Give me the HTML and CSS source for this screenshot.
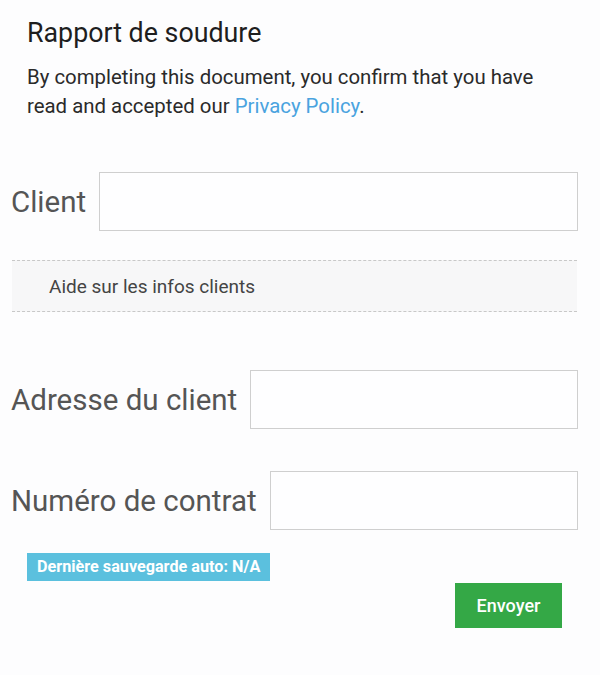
FILE: index.html
```html
<!DOCTYPE html>
<html lang="fr">
<head>
<meta charset="utf-8">
<title>Rapport de soudure</title>
<link rel="stylesheet" href="styles.css">
</head>
<body>
<div class="page">
  <div class="intro">
    <h1 class="title">Rapport de soudure</h1>
    <p class="notice">By completing this document, you confirm that you have read and accepted our <a class="link" href="#">Privacy Policy</a>.</p>
  </div>
  <form class="form">
    <div class="row row-client">
      <label class="label">Client</label>
      <input class="field" type="text">
    </div>
    <div class="help">Aide sur les infos clients</div>
    <div class="row row-adresse">
      <label class="label">Adresse du client</label>
      <input class="field" type="text">
    </div>
    <div class="row row-contrat">
      <label class="label">Numéro de contrat</label>
      <input class="field" type="text">
    </div>
    <div class="status"><span class="badge">Dernière sauvegarde auto: N/A</span></div>
    <div class="actions"><button class="submit" type="button">Envoyer</button></div>
  </form>
</div>
</body>
</html>
```
FILE: styles.css
```css
html, body {
  margin: 0;
  padding: 0;
  background: #fdfdfe;
}
body {
  font-family: Roboto, "Liberation Sans", sans-serif;
  color: #222;
}
.page {
  width: 600px;
}
.intro {
  padding: 19px 27px 0 27px;
}
.title {
  margin: 0;
  font-size: 26.8px;
  line-height: 29px;
  font-weight: 400;
  color: #1e1e1e;
}
.notice {
  margin: 15px 0 0 0;
  max-width: 540px;
  font-size: 20.4px;
  line-height: 29px;
  color: #2a2a2a;
}
.link {
  color: #4aa3df;
  text-decoration: none;
}
.form {
  margin: 0;
  padding: 0 22px 0 11px;
}
.row {
  display: flex;
  align-items: center;
  gap: 13px;
}
.row-client {
  margin-top: 51px;
}
.row-adresse {
  margin-top: 58px;
}
.row-contrat {
  margin-top: 42px;
}
.label {
  font-size: 29.5px;
  color: #555;
  white-space: nowrap;
}
.field {
  flex: 1;
  height: 59px;
  box-sizing: border-box;
  border: 1px solid #cfcfcf;
  background: #fefeff;
  margin: 0;
}
.help {
  margin: 29px 1px 0 1px;
  height: 52px;
  box-sizing: border-box;
  border-top: 1px dashed #c8c8c8;
  border-bottom: 1px dashed #c8c8c8;
  background: #f7f7f8;
  padding-left: 37px;
  display: flex;
  align-items: center;
  font-size: 19px;
  color: #444;
}
.status {
  margin-top: 23px;
  padding-left: 16px;
}
.badge {
  display: inline-block;
  background: #5bc0de;
  color: #fff;
  font-weight: 700;
  font-size: 16.2px;
  line-height: 28px;
  padding: 0 10px;
}
.actions {
  display: flex;
  justify-content: flex-end;
  margin-top: 2px;
  padding-right: 16px;
}
.submit {
  width: 107px;
  height: 45px;
  background: #34a846;
  border: 1px solid #34a846;
  color: #fff;
  font-family: Roboto, "Liberation Sans", sans-serif;
  font-size: 18px;
  font-weight: 500;
  cursor: pointer;
}
```
